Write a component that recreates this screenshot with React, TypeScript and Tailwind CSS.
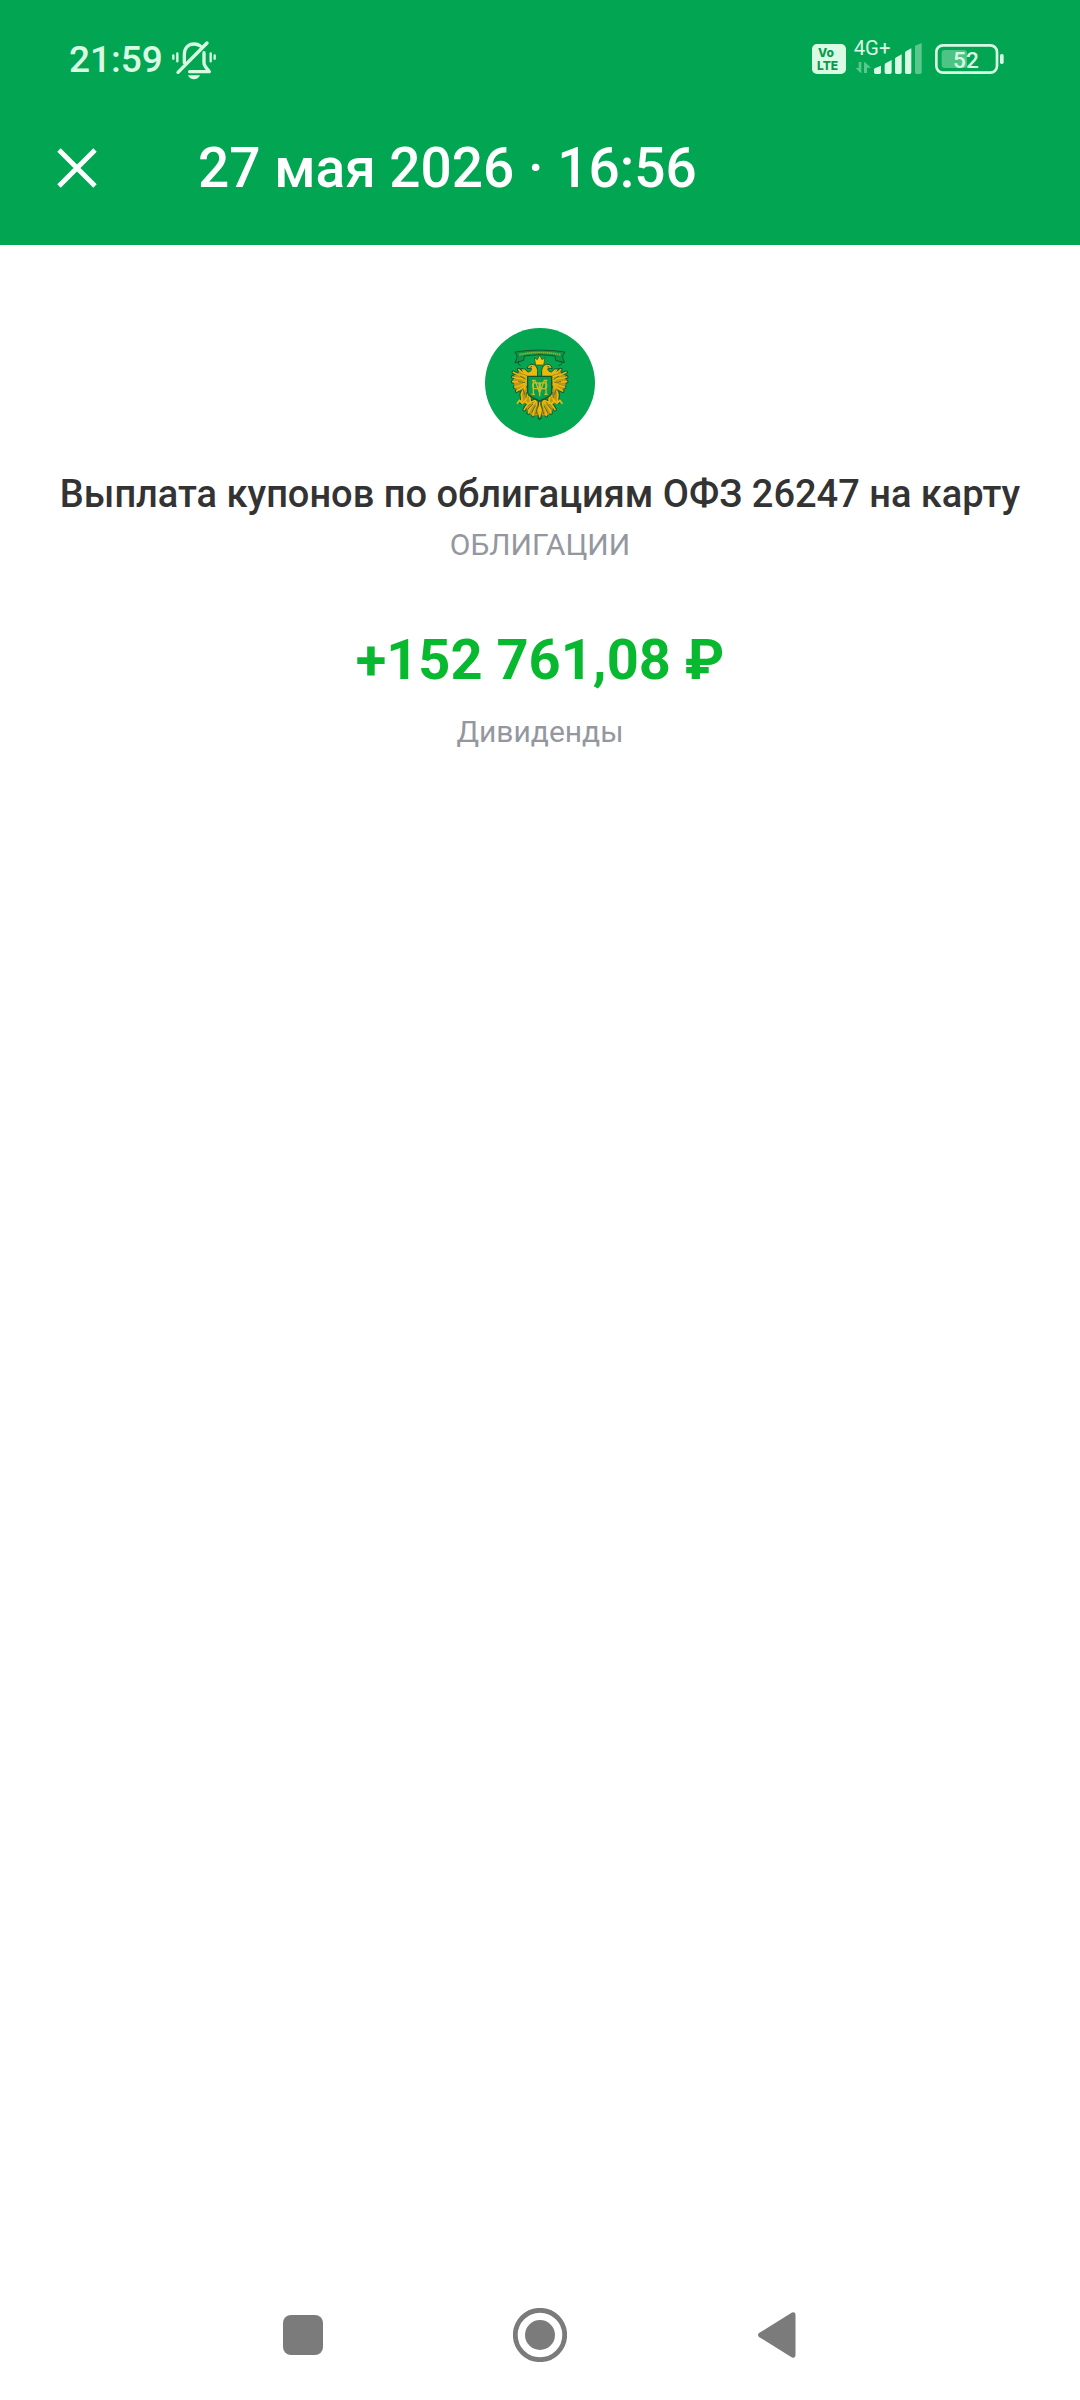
function MutedBellIcon() {
  return (
    <svg viewBox="390 58 138 120" className="h-10 w-[46px]" fill="none" stroke="currentColor" strokeLinecap="round">
      <path d="M397 104v10M409 98v24M509 98v24M521 104v10" strokeWidth="7" />
      <path d="M430 126v-24c0-20 12-32 29-32 8 0 14 2 19 6" strokeWidth="10" />
      <path d="M489 96v31c0 9 7 14 16 26H446" strokeWidth="10" strokeLinejoin="round" />
      <path d="M411 155L498 67" strokeWidth="10" />
      <path d="M441 164h36c-3 8-10 12-18 12s-15-4-18-12z" fill="currentColor" stroke="none" />
    </svg>
  )
}

function VolteIcon() {
  return (
    <svg viewBox="0 0 34 30" className="h-[30px] w-[34px]">
      <rect width="34" height="30" rx="5" fill="currentColor" />
      <g fill="#0b9a50" fontFamily="Inter, sans-serif" fontWeight="800">
        <text x="6" y="13" fontSize="12">Vo</text>
        <text x="5" y="26" fontSize="12">LTE</text>
      </g>
    </svg>
  )
}

function SignalIcon() {
  return (
    <svg viewBox="189 48 207 120" className="h-10 w-[69px]" fill="currentColor">
      <text x="188" y="108" fontSize="61" fontFamily="Roboto, sans-serif">4G+</text>
      <g opacity="0.4">
        <path d="M203 129h8v32h-3l-14-14h9zM219 162v-32h3l18 16h-12v16z" />
        <path d="M372 80l20-8v88q0 5-5 5h-10q-5 0-5-5z" />
      </g>
      <path d="M249 152q0-4 4-5l17-7v20q0 5-5 5h-11q-5 0-5-5z" />
      <path d="M281 138q0-4 4-6l17-9v37q0 5-5 5h-11q-5 0-5-5z" />
      <path d="M312 121q0-4 4-6l16-9v54q0 5-5 5h-10q-5 0-5-5z" />
      <path d="M342 102q0-4 4-6l15-8v72q0 5-5 5h-9q-5 0-5-5z" />
    </svg>
  )
}

function BatteryIcon() {
  return (
    <svg viewBox="435 71 207 90" className="h-[30px] w-[69px]">
      <rect x="439" y="75" width="182" height="82" rx="20" fill="none" stroke="currentColor" strokeWidth="8" />
      <rect x="455" y="89" width="76" height="54" rx="9" fill="currentColor" opacity="0.35" />
      <rect x="630" y="101" width="11" height="30" rx="5" fill="currentColor" />
      <text x="528" y="142" fontSize="68" fontWeight="500" fontFamily="Roboto, sans-serif" textAnchor="middle" fill="currentColor">
        52
      </text>
    </svg>
  )
}

// Left half of the eagle, mirrored for the right half
function EagleHalf() {
  return (
    <g strokeLinecap="round" strokeLinejoin="round">
      <g stroke="#17552d" strokeWidth="11" fill="none">
        <path d="M174 178c-12 0-22-8-28-14M172 184c-16 0-28-6-42-12M170 190c-16 2-30 0-42-4M170 196c-14 6-28 6-42 4M168 202c-10 8-22 12-34 14M168 208c-8 8-18 14-28 20" />
        <path d="M166 216c-4 10-12 12-12 22s4 14 0 24M174 222c0 14-2 24-8 36M178 238c0 10 2 18 4 26" />
        <path d="M196 256c-16 6-28 16-33 28M198 260c-12 10-20 22-23 34M202 264c-8 12-12 24-13 38" />
      </g>
      <path
        d="M174 180c-14-2-22-10-26-16l-4 14-12 2 2 10-6 6 4 10 2 12 10 10c14-2 22-10 30-18zM168 214l-14 22 2 26 18 4 10-14-8-20zM198 256l-30 20 6 16 14 10 18-2 3-40z"
        fill="#c0951a"
      />
      <path
        d="M203 184V166c-2-10-6-18-18-18-8 0-12 6-14 13l12-2c4 7-3 11-9 12l-10-9-12-1 6 11 14 12z"
        fill="#e9b90c"
        stroke="#17552d"
        strokeWidth="3"
      />
      <g stroke="#e9b90f" strokeWidth="5" fill="none">
        <path d="M174 178c-12 0-22-8-28-14M172 184c-16 0-28-6-42-12M170 190c-16 2-30 0-42-4M170 196c-14 6-28 6-42 4M168 202c-10 8-22 12-34 14M168 208c-8 8-18 14-28 20" />
        <path d="M166 216c-4 10-12 12-12 22s4 14 0 24M174 222c0 14-2 24-8 36M178 238c0 10 2 18 4 26" />
        <path d="M196 256c-16 6-28 16-33 28M198 260c-12 10-20 22-23 34M202 264c-8 12-12 24-13 38" />
      </g>
      <path d="M142 265l7-9 8 9 8-8 8 10 8-6" fill="none" stroke="#e9b90f" strokeWidth="5" />
      <circle cx="184" cy="155" r="2" fill="#17552d" />
      <path d="M152 184l14 8M146 200l18 2M160 224l4 14M170 232l-2 16M188 268l-14 14M196 272l-10 20M202 276l-4 20" stroke="#17552d" strokeWidth="2" />
    </g>
  )
}

function EmblemIcon() {
  return (
    <svg viewBox="45 39 330 330" className="size-[110px]" role="img" aria-label="Минфин">
      <circle cx="210" cy="204" r="165" fill="#05a652" />
      <path
        d="M135 111q35-5 52-5 23-2 44 0 20 0 54 5l-8 13 6 19-26-7-2-13q-46-8-92 0l-2 13-26 8 7-20z"
        fill="#08964b"
        stroke="#17552d"
        strokeWidth="3"
        strokeLinejoin="round"
      />
      <path d="M148 119q62-13 124 0" fill="none" stroke="#a9b52a" strokeWidth="5" strokeDasharray="4 2" />
      <path d="M146 138q-6 10 6 14M272 138q8 10-6 14" fill="none" stroke="#17552d" strokeWidth="3" />
      <EagleHalf />
      <g transform="translate(418 0) scale(-1 1)">
        <EagleHalf />
      </g>
      <path d="M209 252v56" stroke="#17552d" strokeWidth="12" strokeLinecap="round" />
      <path d="M209 256v52M209 270l-5 16 5 20 5-20z" fill="#e9b90f" stroke="#e9b90f" strokeWidth="4" />
      <path d="M197 150l-4-22 9 6 7-14 7 14 9-6-4 22z" fill="#f4c60d" stroke="#17552d" strokeWidth="2" />
      <path d="M173 184h72v48c0 16-22 15-36 27-14-12-36-11-36-27z" fill="#08a04f" stroke="#17552d" strokeWidth="4" />
      <g fill="none" stroke="#c6bd2c" strokeWidth="4">
        <path d="M186 196h9l14 38 14-38h9M190 197v39M228 197v39M209 201v43M185 238h10M223 238h10" />
        <ellipse cx="198" cy="212" rx="10" ry="9" />
        <ellipse cx="220" cy="212" rx="10" ry="9" />
      </g>
    </svg>
  )
}

export default function App() {
  return (
    <div className="flex min-h-screen flex-col bg-white font-['Roboto',sans-serif]">
      <header className="bg-[#02a652] pb-[27px] text-white">
        {/* Status bar */}
        <div className="flex h-[118px] items-center justify-between pr-[76px] pl-[69px] text-[#d9fbe3]">
          <div className="flex items-center gap-2 pt-0.5">
            <span className="text-[37px] leading-10 font-medium">21:59</span>
            <MutedBellIcon />
          </div>
          <div className="flex items-center">
            <VolteIcon />
            <div className="mr-3 ml-2 pb-2">
              <SignalIcon />
            </div>
            <BatteryIcon />
          </div>
        </div>

        {/* Title bar */}
        <div className="flex h-[100px] items-center gap-[82px] pl-[38px]">
          <button type="button" aria-label="Закрыть" className="flex size-[78px] items-center justify-center">
            <svg viewBox="0 0 40 40" className="size-10" stroke="currentColor" strokeWidth="4.8">
              <path d="M2 2L38 38M38 2L2 38" />
            </svg>
          </button>
          <h1 className="text-[55px] leading-16 font-medium">27 мая 2026 · 16:56</h1>
        </div>
      </header>

      <main className="flex flex-1 flex-col items-center pt-[83px] text-center">
        <EmblemIcon />
        <h2 className="mt-8 text-[38px] leading-12 font-medium text-[#333333]">
          Выплата купонов по облигациям ОФЗ 26247 на карту
        </h2>
        <p className="mt-[7px] text-[30px] leading-10 text-[#95979f]">ОБЛИГАЦИИ</p>
        <p className="mt-[63px] text-[56px] leading-16 font-bold text-[#08b92f]">+152 761,08 ₽</p>
        <p className="mt-5 text-[30px] leading-10 text-[#95979f]">Дивиденды</p>
      </main>

      {/* System navigation */}
      <nav className="flex h-[130px] items-center justify-center gap-[157px] text-[#7b7b7b]">
        <button type="button" aria-label="Недавние" className="flex size-20 items-center justify-center">
          <span className="size-10 rounded-lg bg-current" />
        </button>
        <button type="button" aria-label="Домой" className="flex size-20 items-center justify-center">
          <svg viewBox="0 0 54 54" className="size-[54px]" fill="currentColor">
            <circle cx="27" cy="27" r="24.7" fill="none" stroke="currentColor" strokeWidth="4.8" />
            <circle cx="27" cy="27" r="15" />
          </svg>
        </button>
        <button type="button" aria-label="Назад" className="flex size-20 items-center justify-center">
          <svg viewBox="0 0 38 46" className="h-[46px] w-[38px]" fill="currentColor">
            <path d="M1 21L34 .6Q37.500-.5 37.500 3V43Q37.500 46.500 34 45.400L1 25Q-1 23 1 21Z" />
          </svg>
        </button>
      </nav>
    </div>
  )
}
